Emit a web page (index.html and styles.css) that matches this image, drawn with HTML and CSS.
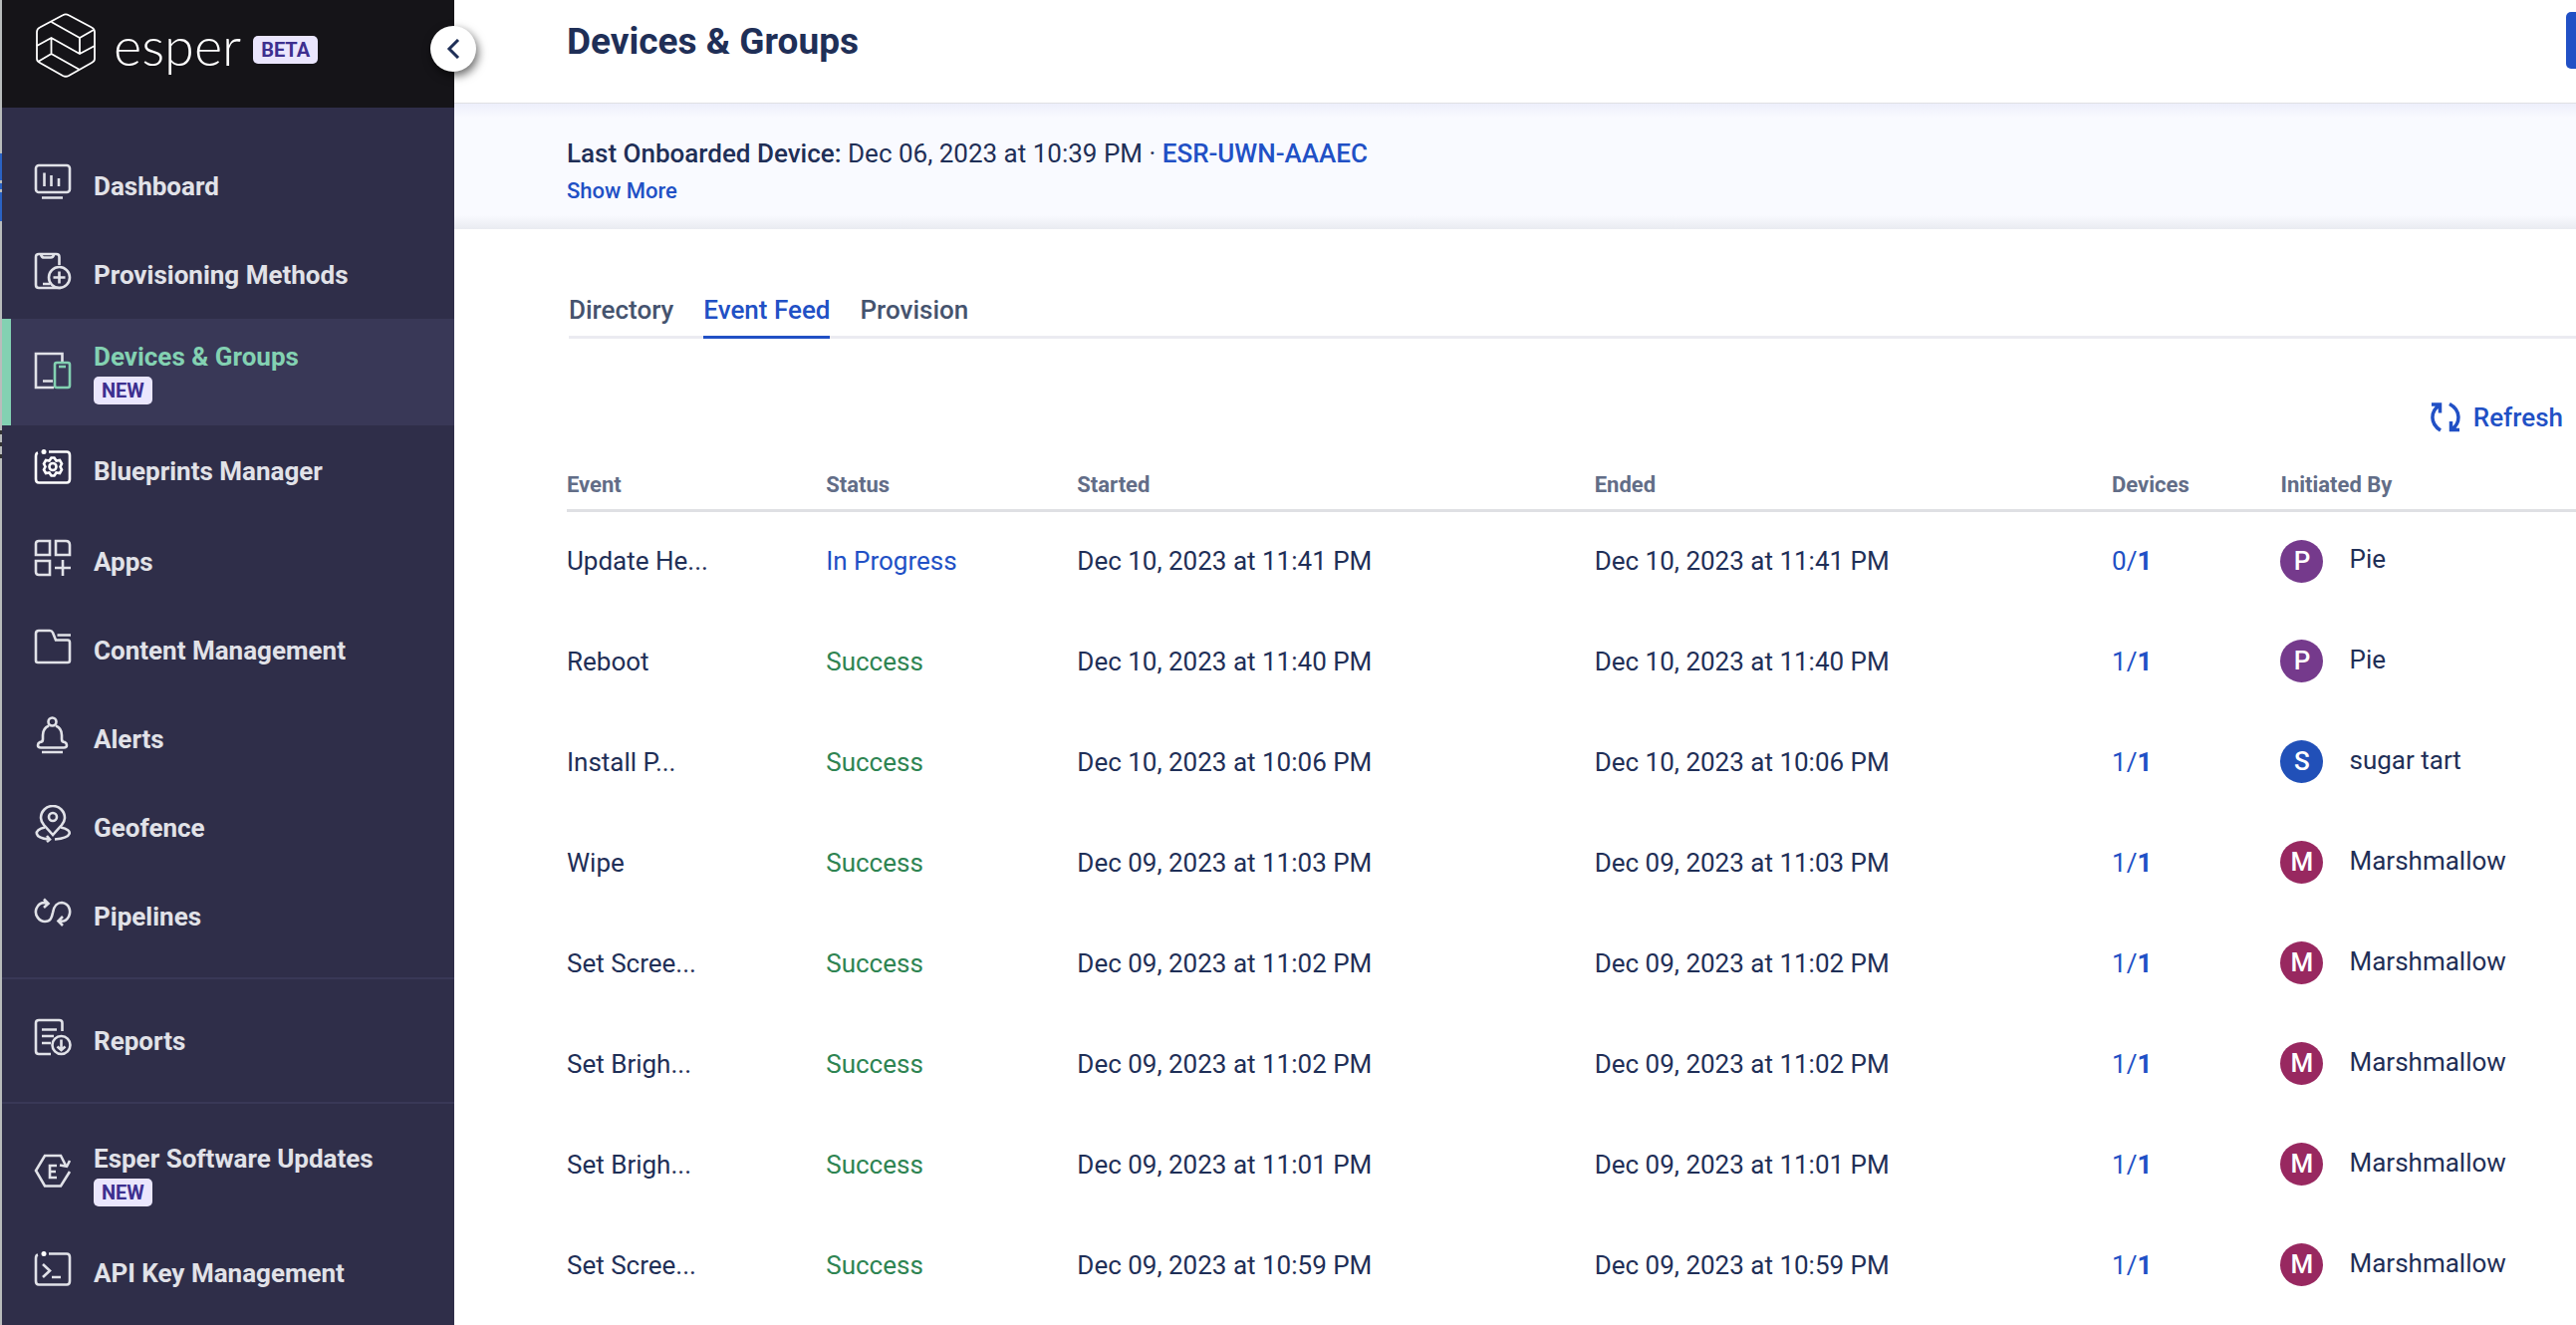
FILE: index.html
```html
<!DOCTYPE html>
<html lang="en">
<head>
    <meta charset="UTF-8">
    <title>Devices &amp; Groups</title>
    <link rel="stylesheet" href="styles.css">
</head>
<body>
    <div class="edge"></div>
    <aside class="sidebar">
        <div class="brand">
            <svg class="logo" viewBox="0 0 60 66" fill="none" stroke="#fff" stroke-width="1.8" stroke-linejoin="round">
                <path d="M27 2.200Q30 .5 33 2.200L56 14.500Q59 16 59 19V46Q59 48.500 56 50L33 63Q30 64.500 27 63L4 50Q1 48.500 1 46V19Q1 16 4 14.500Z"/>
                <path d="M15.500 9L44 25L58 17M44 25V41L15.500 25L1 33M44 41L59 33M15.500 25V41L44 57M15.500 41L2 49"/>
            </svg>
            <span class="brand-name">esper</span>
            <span class="tag">BETA</span>
        </div>
        <button class="collapse" aria-label="Collapse menu">
            <svg viewBox="0 0 14 20" fill="none" stroke="#1f2f57" stroke-width="3"><path d="M12 1L3 10L12 19"/></svg>
        </button>
        <nav class="menu">
            <a class="item" href="#">
                <svg viewBox="0 0 38 38"><rect x="2" y="2" width="34" height="27" rx="3"/><path d="M10.500 9.500V23M17.500 12V23M25 15V23M8 34.500H29"/></svg>
                <span>Dashboard</span>
            </a>
            <a class="item" href="#">
                <svg viewBox="0 0 38 38"><path d="M25.500 13V5Q25.500 2 22.500 2H5Q2 2 2 5V33Q2 36 5 36H27M7 2.500Q8 5.500 10 5.500H17Q19.500 5.500 20 2.500M9 32H16"/><circle cx="25.500" cy="25.500" r="10.500"/><path d="M19.500 25.500H31.500M25.500 19.500V31.500"/></svg>
                <span>Provisioning Methods</span>
            </a>
            <a class="item active" href="#">
                <svg viewBox="0 0 38 38"><path class="pale" d="M28.500 10V2H2V36H20M9 29.500H19"/><rect x="21" y="11" width="15" height="25" rx="2"/><path d="M25 15H32"/></svg>
                <span>Devices &amp; Groups<br><span class="tag">NEW</span></span>
            </a>
            <a class="item tall" href="#">
                <svg class="bright" viewBox="0 0 38 38"><path d="M4 4.500Q2 5 2 8V31Q2 34.500 5 34.500H33Q36 34.500 36 31V7Q36 3.500 33 3.500H15"/><circle class="dot" cx="10" cy="3.500" r="2.500"/><path d="M17.500 9.500H20.500L22.500 12.500L26 12L28 15.500L26.500 18.500L28 21.500L26 25L22.500 24.500L20.500 27.500H17.500L15.500 24.500L12 25L10 21.500L11.500 18.500L10 15.500L12 12L15.500 12.500Z"/><circle cx="19" cy="18.500" r="3.500"/></svg>
                <span>Blueprints Manager</span>
            </a>
            <a class="item" href="#">
                <svg viewBox="0 0 38 38"><path d="M5 2H16V16H2V5Q2 2 5 2ZM22 2H32Q36 2 36 6V16H22ZM2 22H16V36H5Q2 36 2 33ZM29 21V37M21 29H37"/></svg>
                <span>Apps</span>
            </a>
            <a class="item" href="#">
                <svg viewBox="0 0 38 38"><path d="M2 6Q2 3 5 3H16Q18 3 19 5L22 12.500H34Q36 12.500 36 15V33Q36 35 34 35H4Q2 35 2 33ZM23.500 7.500H37"/></svg>
                <span>Content Management</span>
            </a>
            <a class="item" href="#">
                <svg viewBox="0 0 38 38"><circle cx="18.500" cy="5.500" r="4"/><path d="M15 9.500Q9 12 9 19V23Q9 26 6 26Q4 27 4 29Q4 31.500 7 31.500H30Q33 31.500 33 29Q33 27 31 26Q28 26 28 23V19Q28 12 22 9.500M8 36H29"/></svg>
                <span>Alerts</span>
            </a>
            <a class="item" href="#">
                <svg viewBox="0 0 38 38"><path d="M19 30L10 20Q7 16 7 13A12 12 0 0 1 31 13Q31 16 28 20Z"/><circle cx="19" cy="12" r="4"/><path d="M11 22.500C-1 25 0 33 15 34.500M13 31L16 34.500L13 37M27 22.500C40 25 39 33 21 34.500"/></svg>
                <span>Geofence</span>
            </a>
            <a class="item" href="#">
                <svg viewBox="0 0 38 38"><path d="M14 10Q6 7 2.500 15C0 22 6 28 11 28C17 28 18 24 19 19C20 12 24 9 28 9C36 10 37.500 18 35 23Q32 29 25 27.500M10 5.500L14.500 10L10 14M29 23L24.500 27.500L29 32"/></svg>
                <span>Pipelines</span>
            </a>
            <hr>
            <a class="item" href="#">
                <svg viewBox="0 0 38 38"><path d="M28.500 13V5Q28.500 2 25.500 2H5Q2 2 2 5V33Q2 36 5 36H17M8 11.500H23M8 18H20M8 25H17"/><circle cx="27.500" cy="27" r="9"/><path d="M27.500 21.500V32M23.500 28.500L27.500 32L31.500 28.500"/></svg>
                <span>Reports</span>
            </a>
            <hr>
            <a class="item two-line" href="#">
                <svg viewBox="0 0 38 38"><path d="M36 20L27 34.500H11L2 19L11 4H27L32 14M26 13.500L34 15M33 15L36 9"/><path d="M23 14H16V26H23M16 20H22"/></svg>
                <span>Esper Software Updates<br><span class="tag">NEW</span></span>
            </a>
            <a class="item" href="#">
                <svg viewBox="0 0 38 38"><path d="M4 4.500Q2 5 2 8V31Q2 34.500 5 34.500H33Q36 34.500 36 31V7Q36 3.500 33 3.500H15"/><circle class="dot" cx="10" cy="3.500" r="2.500"/><path d="M9 14L16 20.500L9 27M18 27H27"/></svg>
                <span>API Key Management</span>
            </a>
        </nav>
    </aside>

    <main class="main">
        <header class="top">
            <h1>Devices &amp; Groups</h1>
            <button class="primary" aria-label="Add device"></button>
        </header>
        <section class="info">
            <p><b>Last Onboarded Device:</b> Dec 06, 2023 at 10:39 PM · <a href="#">ESR-UWN-AAAEC</a></p>
            <button class="more">Show More</button>
        </section>
        <section class="content">
            <div class="tabs">
                <a href="#">Directory</a>
                <a href="#" class="on">Event Feed</a>
                <a href="#">Provision</a>
            </div>
            <div class="tools">
                <button class="refresh">
                    <svg viewBox="0 0 30 30" fill="none" stroke="#2150c5" stroke-width="3.500"><path d="M10 28C-1 21 0 9 8.500 3M1 2H9.500V10.500M19 1.500C31 8 30 21 21.500 27M29 27.500H20.500V19"/></svg>
                    Refresh
                </button>
            </div>
            <table>
                <colgroup><col class="c-event"><col class="c-status"><col class="c-date"><col class="c-date"><col class="c-devices"><col></colgroup>
                <thead>
                    <tr><th>Event</th><th>Status</th><th>Started</th><th>Ended</th><th>Devices</th><th>Initiated By</th></tr>
                </thead>
                <tbody>
                    <tr><td>Update He...</td><td class="progress">In Progress</td><td>Dec 10, 2023 at 11:41 PM</td><td>Dec 10, 2023 at 11:41 PM</td><td><a href="#">0/<b>1</b></a></td><td><div class="user"><i class="purple">P</i><span>Pie</span></div></td></tr>
                    <tr><td>Reboot</td><td class="success">Success</td><td>Dec 10, 2023 at 11:40 PM</td><td>Dec 10, 2023 at 11:40 PM</td><td><a href="#">1/<b>1</b></a></td><td><div class="user"><i class="purple">P</i><span>Pie</span></div></td></tr>
                    <tr><td>Install P...</td><td class="success">Success</td><td>Dec 10, 2023 at 10:06 PM</td><td>Dec 10, 2023 at 10:06 PM</td><td><a href="#">1/<b>1</b></a></td><td><div class="user"><i class="blue">S</i><span>sugar tart</span></div></td></tr>
                    <tr><td>Wipe</td><td class="success">Success</td><td>Dec 09, 2023 at 11:03 PM</td><td>Dec 09, 2023 at 11:03 PM</td><td><a href="#">1/<b>1</b></a></td><td><div class="user"><i class="red">M</i><span>Marshmallow</span></div></td></tr>
                    <tr><td>Set Scree...</td><td class="success">Success</td><td>Dec 09, 2023 at 11:02 PM</td><td>Dec 09, 2023 at 11:02 PM</td><td><a href="#">1/<b>1</b></a></td><td><div class="user"><i class="red">M</i><span>Marshmallow</span></div></td></tr>
                    <tr><td>Set Brigh...</td><td class="success">Success</td><td>Dec 09, 2023 at 11:02 PM</td><td>Dec 09, 2023 at 11:02 PM</td><td><a href="#">1/<b>1</b></a></td><td><div class="user"><i class="red">M</i><span>Marshmallow</span></div></td></tr>
                    <tr><td>Set Brigh...</td><td class="success">Success</td><td>Dec 09, 2023 at 11:01 PM</td><td>Dec 09, 2023 at 11:01 PM</td><td><a href="#">1/<b>1</b></a></td><td><div class="user"><i class="red">M</i><span>Marshmallow</span></div></td></tr>
                    <tr><td>Set Scree...</td><td class="success">Success</td><td>Dec 09, 2023 at 10:59 PM</td><td>Dec 09, 2023 at 10:59 PM</td><td><a href="#">1/<b>1</b></a></td><td><div class="user"><i class="red">M</i><span>Marshmallow</span></div></td></tr>
                </tbody>
            </table>
        </section>
    </main>
</body>
</html>
```
FILE: styles.css
```css
*{
    box-sizing: border-box;
}
body{
    margin: 0;
    display: flex;
    min-height: 100vh;
    font-family: Roboto, "Liberation Sans", sans-serif;
    font-size: 26px;
    line-height: 32px;
    color: #1f2f57;
    background: #fff;
}
a{
    color: #2150c5;
    text-decoration: none;
}
button{
    border: none;
    padding: 0;
    font-family: inherit;
    cursor: pointer;
}
/* window behind the sidebar */
.edge{
    width: 2px;
    background: linear-gradient(
        #b9bcbc 154px,
        #2a62c4 154px, #2a62c4 181px,
        #b9bcbc 181px, #b9bcbc 184px,
        #2a62c4 184px, #2a62c4 190px,
        #b9bcbc 190px, #b9bcbc 193px,
        #2a62c4 193px, #2a62c4 222px,
        #b9bcbc 222px, #b9bcbc 432px,
        #333 432px, #333 436px,
        #b9bcbc 436px, #b9bcbc 444px,
        #333 444px, #333 448px,
        #b9bcbc 448px, #b9bcbc 456px,
        #333 456px, #333 460px,
        #b9bcbc 460px);
}

.sidebar{
    position: relative;
    flex: none;
    width: 454px;
    background: #2f2e49;
}
.brand{
    display: flex;
    align-items: center;
    height: 108px;
    padding: 0 0 16px 34px;
    background: #151418;
}
.logo{
    width: 60px;
    height: 66px;
}
.brand-name{
    margin: 0 12px 0 18px;
    font-family: Lato, sans-serif;
    font-size: 54px;
    font-weight: 300;
    line-height: 60px;
    color: #fff;
}
.tag{
    display: inline-block;
    padding: 0 8px;
    border-radius: 5px;
    font-size: 20px;
    font-weight: bold;
    line-height: 28px;
    color: #3d2f8f;
    background: #eae6fd;
}
.brand .tag{
    margin-top: 8px;
}
.collapse{
    position: absolute;
    top: 26px;
    right: -22px;
    display: flex;
    align-items: center;
    justify-content: center;
    width: 46px;
    height: 46px;
    border-radius: 50%;
    background: #fff;
    box-shadow: 2px 4px 10px rgba(0, 0, 0, 0.6);
}
.collapse svg{
    width: 14px;
    height: 20px;
}
.menu{
    padding-top: 34px;
}
.item{
    display: flex;
    align-items: center;
    gap: 22px;
    height: 89px;
    padding-left: 32px;
    font-weight: bold;
    color: #e1e2e8;
}
.item svg{
    flex: none;
    width: 38px;
    height: 38px;
    margin-bottom: 8px;
    fill: none;
    stroke: #e1e2e8;
    stroke-width: 2.6;
}
.item .dot{
    fill: #fff;
    stroke: none;
}
.item .bright{
    stroke: #fff;
}
.tall{
    height: 92px;
}
.two-line{
    height: 108px;
}
.active{
    height: 107px;
    padding-left: 23px;
    border-left: 9px solid #83d1b2;
    color: #83d1b2;
    background: #393857;
}
.active svg{
    margin-bottom: 4px;
    stroke: #83d1b2;
}
.active .pale{
    stroke: #e1e2e8;
}
.menu hr{
    height: 2px;
    margin: 17px 0;
    border: none;
    background: #393857;
}

.main{
    flex: 1;
    min-width: 0;
    overflow: hidden;
}
.top{
    display: flex;
    justify-content: space-between;
    height: 104px;
    padding: 12px 0 0 113px;
    border-bottom: 1px solid #dfe0e4;
}
h1{
    margin: 8px 0 0;
    font-size: 37px;
    line-height: 44px;
}
/* runs past the right edge */
.primary{
    width: 160px;
    height: 57px;
    margin-right: -150px;
    border-radius: 5px;
    background: #2150c5;
}
.info{
    height: 126px;
    padding: 30px 0 0 113px;
    background: linear-gradient(#edeffb, #f9faff 14px, #f9faff 112px, #e9ebf1);
}
.info p{
    margin: 0;
    line-height: 40px;
}
.info b, .info a{
    font-weight: 500;
}
.more{
    display: block;
    font-size: 22px;
    font-weight: 500;
    line-height: 36px;
    color: #2150c5;
    background: none;
}
.content{
    padding: 62px 0 0 113px;
}
.tabs{
    display: flex;
    gap: 30px;
    margin-left: 2px;
    border-bottom: 3px solid #ebebf1;
}
.tabs a{
    padding-bottom: 7px;
    margin-bottom: -3px;
    border-bottom: 3px solid transparent;
    font-weight: 500;
    line-height: 38px;
    color: #45536e;
}
.tabs .on{
    color: #2150c5;
    border-color: #2150c5;
}
.tools{
    display: flex;
    justify-content: flex-end;
    padding: 60px 13px 0 0;
}
.refresh{
    display: flex;
    align-items: center;
    gap: 13px;
    font-size: 26px;
    font-weight: 500;
    line-height: 38px;
    color: #2150c5;
    background: none;
}
.refresh svg{
    width: 30px;
    height: 30px;
}

table{
    width: 100%;
    margin-top: 30px;
    table-layout: fixed;
    border-collapse: collapse;
}
.c-event{
    width: 12.9%;
}
.c-status{
    width: 12.5%;
}
.c-date{
    width: 25.75%;
}
.c-devices{
    width: 8.4%;
}
th{
    height: 44px;
    padding: 0 0 4px;
    border-bottom: 3px solid #dfe0e4;
    font-size: 22px;
    text-align: left;
    color: #626d87;
}
td{
    height: 101px;
    padding: 0;
    white-space: nowrap;
}
.progress{
    color: #2150c5;
}
.success{
    color: #2e8452;
}
.user{
    display: flex;
    align-items: center;
    gap: 26px;
}
.user span{
    padding-bottom: 4px;
}
.user i{
    width: 43px;
    height: 43px;
    border-radius: 50%;
    font-style: normal;
    font-weight: 500;
    line-height: 43px;
    text-align: center;
    color: #fff;
}
.purple{
    background: #753a8c;
}
.blue{
    background: #2150b8;
}
.red{
    background: #982860;
}
```
